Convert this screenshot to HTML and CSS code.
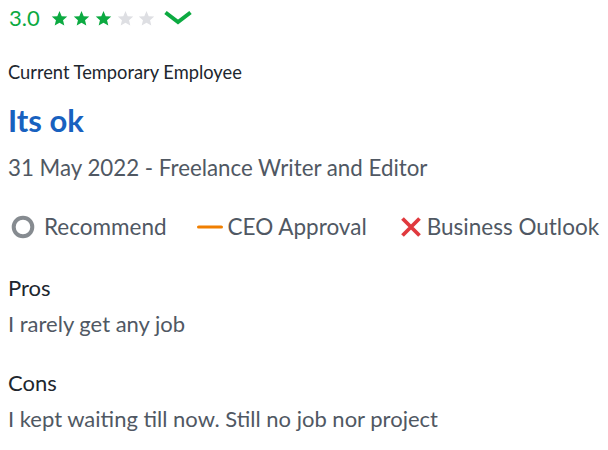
FILE: index.html
```html
<!DOCTYPE html>
<html>
<head>
<meta charset="utf-8">
<link rel="stylesheet" href="styles.css">
</head>
<body>
<div class="review">
  <div class="rating">
    <span class="score">3.0</span>
    <span class="stars">
      <svg class="star on" viewBox="0 0 24 24"><path d="M12 1.5l3.1 7.2 7.8.6-5.9 5.1 1.8 7.6L12 17.9 5.2 22l1.8-7.6L1.1 9.3l7.8-.6z"/></svg>
      <svg class="star on" viewBox="0 0 24 24"><path d="M12 1.5l3.1 7.2 7.8.6-5.9 5.1 1.8 7.6L12 17.9 5.2 22l1.8-7.6L1.1 9.3l7.8-.6z"/></svg>
      <svg class="star on" viewBox="0 0 24 24"><path d="M12 1.5l3.1 7.2 7.8.6-5.9 5.1 1.8 7.6L12 17.9 5.2 22l1.8-7.6L1.1 9.3l7.8-.6z"/></svg>
      <svg class="star off" viewBox="0 0 24 24"><path d="M12 1.5l3.1 7.2 7.8.6-5.9 5.1 1.8 7.6L12 17.9 5.2 22l1.8-7.6L1.1 9.3l7.8-.6z"/></svg>
      <svg class="star off" viewBox="0 0 24 24"><path d="M12 1.5l3.1 7.2 7.8.6-5.9 5.1 1.8 7.6L12 17.9 5.2 22l1.8-7.6L1.1 9.3l7.8-.6z"/></svg>
    </span>
    <svg class="chevron" viewBox="0 0 28 15"><path d="M1.5 2.5L14 12L26.5 2.5" fill="none" stroke="#0caa41" stroke-width="4"/></svg>
  </div>
  <div class="status">Current Temporary Employee</div>
  <h2 class="title">Its ok</h2>
  <div class="meta">31 May 2022 - Freelance Writer and Editor</div>
  <div class="indicators">
    <span class="ind">
      <svg class="ico ring" viewBox="0 0 24 24"><circle cx="12" cy="12" r="9.3" fill="none" stroke="#868b90" stroke-width="4"/></svg>
      <span>Recommend</span>
    </span>
    <span class="ind">
      <svg class="ico dash" viewBox="0 0 26 24"><rect x="0" y="10.4" width="26" height="3.2" rx="1.6" fill="#f07f00"/></svg>
      <span>CEO Approval</span>
    </span>
    <span class="ind">
      <svg class="ico cross" viewBox="0 0 22 22"><path d="M2.5 2.5l17 17M19.5 2.5l-17 17" stroke="#e0393e" stroke-width="3.8"/></svg>
      <span>Business Outlook</span>
    </span>
  </div>
  <div class="section">
    <div class="sec-title">Pros</div>
    <div class="sec-body">I rarely get any job</div>
  </div>
  <div class="section">
    <div class="sec-title">Cons</div>
    <div class="sec-body">I kept waiting till now. Still no job nor project</div>
  </div>
</div>
</body>
</html>
```
FILE: styles.css
```css
html, body {
  margin: 0;
  padding: 0;
  background: #ffffff;
}
body {
  font-family: Lato, "Noto Sans", sans-serif;
  color: #505863;
}
.review {
  padding: 0 8px;
  display: flex;
  flex-direction: column;
}
.rating {
  display: flex;
  align-items: center;
  height: 36px;
  padding-left: 1px;
}
.score {
  color: #0caa41;
  font-size: 22px;
  line-height: 36px;
}
.stars {
  display: flex;
  gap: 4.8px;
  margin-left: 11.5px;
}
.star {
  width: 17px;
  height: 17px;
}
.star.on { fill: #0caa41; }
.star.off { fill: #dedfe3; }
.chevron {
  width: 28px;
  height: 15px;
  margin-left: 8.5px;
  margin-bottom: 2px;
}
.status {
  margin-top: 25px;
  font-size: 18.3px;
  line-height: 22px;
  color: #20262e;
}
.title {
  margin: 18px 0 0 0;
  font-size: 31px;
  font-weight: 700;
  color: #1861bf;
  line-height: 38px;
}
.meta {
  margin-top: 13.5px;
  font-size: 22.3px;
  line-height: 30px;
}
.indicators {
  display: flex;
  gap: 30px;
  margin-top: 29px;
  font-size: 22.5px;
  line-height: 30px;
  white-space: nowrap;
}
.ind {
  display: flex;
  align-items: center;
  flex: none;
}
.ico {
  height: 24px;
  flex: none;
}
.ring {
  width: 24px;
  margin-left: 3px;
  margin-right: 9px;
}
.dash {
  width: 26px;
  margin-right: 5px;
}
.cross {
  width: 22px;
  height: 22px;
  margin-left: 3px;
  margin-right: 5px;
}
.section {
  display: flex;
  flex-direction: column;
  gap: 6px;
  margin-top: 31px;
}
.section + .section {
  margin-top: 29px;
}
.sec-title {
  font-size: 22px;
  line-height: 30px;
  color: #20262e;
}
.sec-body {
  font-size: 22px;
  line-height: 30px;
}
```
